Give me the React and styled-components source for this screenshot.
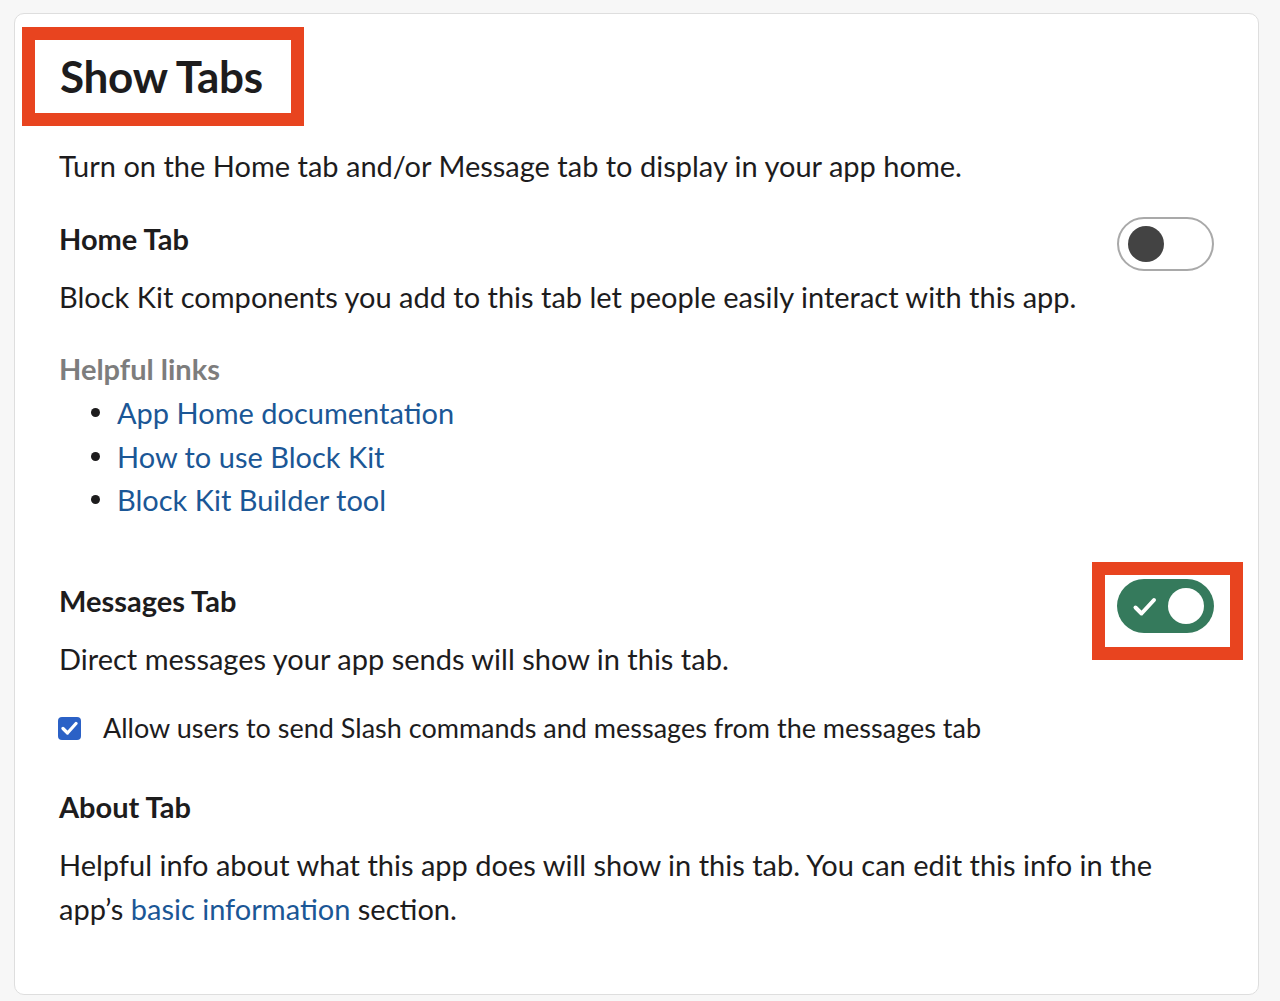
import React, { useState } from 'react';
import styled, { createGlobalStyle } from 'styled-components';

const GlobalStyle = createGlobalStyle`
  html, body {
    margin: 0;
    padding: 0;
    background: #f7f7f7;
  }
  body {
    font-family: Lato, "Noto Sans", sans-serif;
    color: #1d1c1d;
  }
`;

const Card = styled.div`
  box-sizing: border-box;
  margin: 13px 0 0 14px;
  width: 1245px;
  height: 982px;
  padding: 13px 44px 0 44px;
  background: #fff;
  border: 1px solid #dedede;
  border-radius: 10px;
`;

const Annotated = styled.div`
  display: inline-block;
  border: 13px solid #e8441f;
`;

const TitleBox = styled(Annotated)`
  margin-left: -37px;
  padding: 10px 28px 10px 25px;
`;

const Title = styled.h1`
  margin: 0;
  font-size: 44px;
  line-height: 1.2;
  font-weight: 700;
  letter-spacing: -0.3px;
`;

const Text = styled.p`
  margin: ${p => p.$mt || 0}px 0 0;
  font-size: 29px;
  line-height: 44px;
  color: ${p => p.$muted ? '#7d7d7d' : '#1d1c1d'};
  font-weight: ${p => p.$bold ? 700 : 400};
`;

const Section = styled.section`
  display: grid;
  grid-template-columns: 1fr auto;
  margin-top: ${p => p.$mt}px;
`;

const Heading = styled.h2`
  margin: 0 0 14px;
  font-size: 29px;
  line-height: 44px;
  font-weight: 700;
`;

const Body = styled.div`
  grid-column: 1 / -1;
`;

const ToggleSlot = styled.div`
  grid-column: 2;
  grid-row: 1;
  align-self: start;
`;

const ToggleBox = styled(Annotated)`
  display: block;
  padding: 4px 16px 14px 12px;
  margin: -17px -29px -27px -25px;
`;

const Track = styled.button`
  position: relative;
  display: block;
  box-sizing: border-box;
  width: 97px;
  height: 54px;
  padding: 0;
  border-radius: 27px;
  cursor: pointer;
  border: ${p => p.$on ? 'none' : '2px solid #a9a9a9'};
  background: ${p => p.$on ? '#357a5c' : '#fff'};
`;

const Knob = styled.span`
  position: absolute;
  top: 50%;
  width: 36px;
  height: 36px;
  margin-top: -18px;
  border-radius: 50%;
  left: ${p => p.$on ? '51px' : '9px'};
  background: ${p => p.$on ? '#fff' : '#434343'};
`;

const Check = styled.svg`
  position: absolute;
  left: 15px;
  top: 17px;
`;

const Toggle = ({ on, onClick }) => (
  <Track $on={on} onClick={onClick} aria-pressed={on}>
    {on && (
      <Check width="26" height="22" viewBox="0 0 26 22">
        <path d="M3.5 11.5 L9.5 17.5 L22 4" fill="none" stroke="#fff" strokeWidth="4" strokeLinecap="round" strokeLinejoin="round" />
      </Check>
    )}
    <Knob $on={on} />
  </Track>
);

const LinkList = styled.ul`
  margin: 0;
  padding: 0;
  list-style: none;
`;

const LinkItem = styled.li`
  display: flex;
  align-items: center;
  height: 43.5px;
  font-size: 29px;

  &::before {
    content: '';
    width: 9px;
    height: 9px;
    margin: 0 17px 0 32px;
    border-radius: 50%;
    background: #1d1c1d;
  }
`;

const Link = styled.a`
  color: #1b5796;
  text-decoration: none;
  cursor: pointer;
`;

const CheckRow = styled.label`
  display: flex;
  align-items: center;
  margin-top: 25px;
  font-size: 27px;
  line-height: 44px;
  cursor: pointer;
`;

const Box = styled.span`
  display: flex;
  align-items: center;
  justify-content: center;
  box-sizing: border-box;
  width: 23px;
  height: 23px;
  margin: 0 22px 0 -1px;
  border-radius: 4px;
  background: ${p => p.$checked ? '#2b61c6' : '#fff'};
  border: ${p => p.$checked ? 'none' : '2px solid #888'};
`;

export default function App() {
  const [home, setHome] = useState(false);
  const [messages, setMessages] = useState(true);
  const [allow, setAllow] = useState(true);

  return (
    <>
      <GlobalStyle />
      <Card>
        <TitleBox>
          <Title>Show Tabs</Title>
        </TitleBox>
        <Text $mt={18}>Turn on the Home tab and/or Message tab to display in your app home.</Text>

        <Section $mt={29}>
          <Heading>Home Tab</Heading>
          <ToggleSlot>
            <Toggle on={home} onClick={() => setHome(v => !v)} />
          </ToggleSlot>
          <Body>
            <Text>Block Kit components you add to this tab let people easily interact with this app.</Text>
            <Text $mt={28} $muted $bold>Helpful links</Text>
            <LinkList>
              <LinkItem><Link>App Home documentation</Link></LinkItem>
              <LinkItem><Link>How to use Block Kit</Link></LinkItem>
              <LinkItem><Link>Block Kit Builder tool</Link></LinkItem>
            </LinkList>
          </Body>
        </Section>

        <Section $mt={58}>
          <Heading>Messages Tab</Heading>
          <ToggleSlot>
            <ToggleBox>
              <Toggle on={messages} onClick={() => setMessages(v => !v)} />
            </ToggleBox>
          </ToggleSlot>
          <Body>
            <Text>Direct messages your app sends will show in this tab.</Text>
            <CheckRow onClick={() => setAllow(v => !v)}>
              <Box $checked={allow}>
                {allow && (
                  <svg width="17" height="14" viewBox="0 0 17 14">
                    <path d="M2 7.5 L6.5 12 L15 2.5" fill="none" stroke="#fff" strokeWidth="3.2" strokeLinecap="round" strokeLinejoin="round" />
                  </svg>
                )}
              </Box>
              Allow users to send Slash commands and messages from the messages tab
            </CheckRow>
          </Body>
        </Section>

        <Section $mt={35}>
          <Heading>About Tab</Heading>
          <Body>
            <Text>
              Helpful info about what this app does will show in this tab. You can edit this info in the app’s{' '}
              <Link>basic information</Link> section.
            </Text>
          </Body>
        </Section>
      </Card>
    </>
  );
}
